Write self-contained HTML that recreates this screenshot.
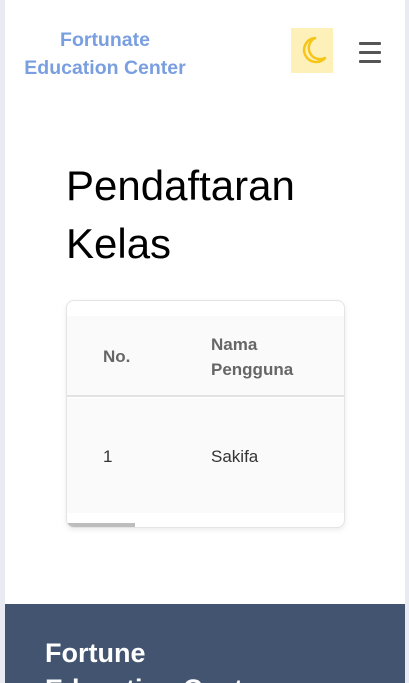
<!DOCTYPE html>
<html><head><style>
*{margin:0;padding:0;box-sizing:border-box}
html,body{width:409px;height:683px;overflow:hidden}
body{background:#e8ecf2;font-family:"Liberation Sans",sans-serif;position:relative}
.page{position:absolute;left:5px;top:0;width:400px;height:683px;background:#fff;overflow:hidden}
.logo{position:absolute;left:0;width:200px;top:26px;text-align:center;color:#7a9fe0;font-size:19.5px;line-height:28px;font-weight:bold}
.moon{position:absolute;left:286px;top:28px;width:42px;height:45px;background:#fdf0b8}
.ham{position:absolute;left:354px;top:42px;width:22px}
.ham div{height:3px;background:#555;margin-bottom:6px;border-radius:1px}
h1{position:absolute;left:61px;top:157px;font-weight:normal;font-size:42px;line-height:58px;color:#000}
.card{position:absolute;left:61px;top:300px;width:279px;height:228px;border:1px solid #e4e4e4;border-radius:8px;background:#fff;box-shadow:0 2px 6px rgba(0,0,0,.08);overflow:hidden}
.hd{position:absolute;left:0;top:15px;width:100%;height:81px;background:#fafafa;border-bottom:2px solid #e2e2e2}
.bd{position:absolute;left:0;top:97px;width:100%;height:115px;background:#fafafa}
.t{position:absolute;font-size:17px;color:#555;line-height:25px}
.sb{position:absolute;left:0;top:222px;width:68px;height:5px;background:#bdbdbd}
.foot{position:absolute;left:0;top:604px;width:400px;height:79px;background:#42546f;overflow:hidden}
.foot div{position:absolute;left:40px;top:31px;color:#fff;font-size:27px;font-weight:bold;line-height:36px;white-space:nowrap}
</style></head><body>
<div class="page">
<div class="logo">Fortunate<br>Education Center</div>
<div class="moon"><svg width="42" height="45" viewBox="0 0 42 45"><path d="M24 10 A12 12 0 1 0 34 30 A10 10 0 0 1 24 10 Z" fill="none" stroke="#f5c518" stroke-width="2.5" stroke-linejoin="round"/></svg></div>
<div class="ham"><div></div><div></div><div></div></div>
<h1>Pendaftaran<br>Kelas</h1>
<div class="card">
<div class="hd"></div><div class="bd"></div>
<div class="t" style="left:36px;top:43px;font-weight:bold;color:#666">No.</div>
<div class="t" style="left:144px;top:31px;font-weight:bold;color:#666">Nama<br>Pengguna</div>
<div class="t" style="left:36px;top:143px;color:#333">1</div>
<div class="t" style="left:144px;top:143px;color:#333">Sakifa</div>
<div class="sb"></div>
</div>
<div class="foot"><div>Fortune<br>Education Center</div></div>
</div>
</body></html>
